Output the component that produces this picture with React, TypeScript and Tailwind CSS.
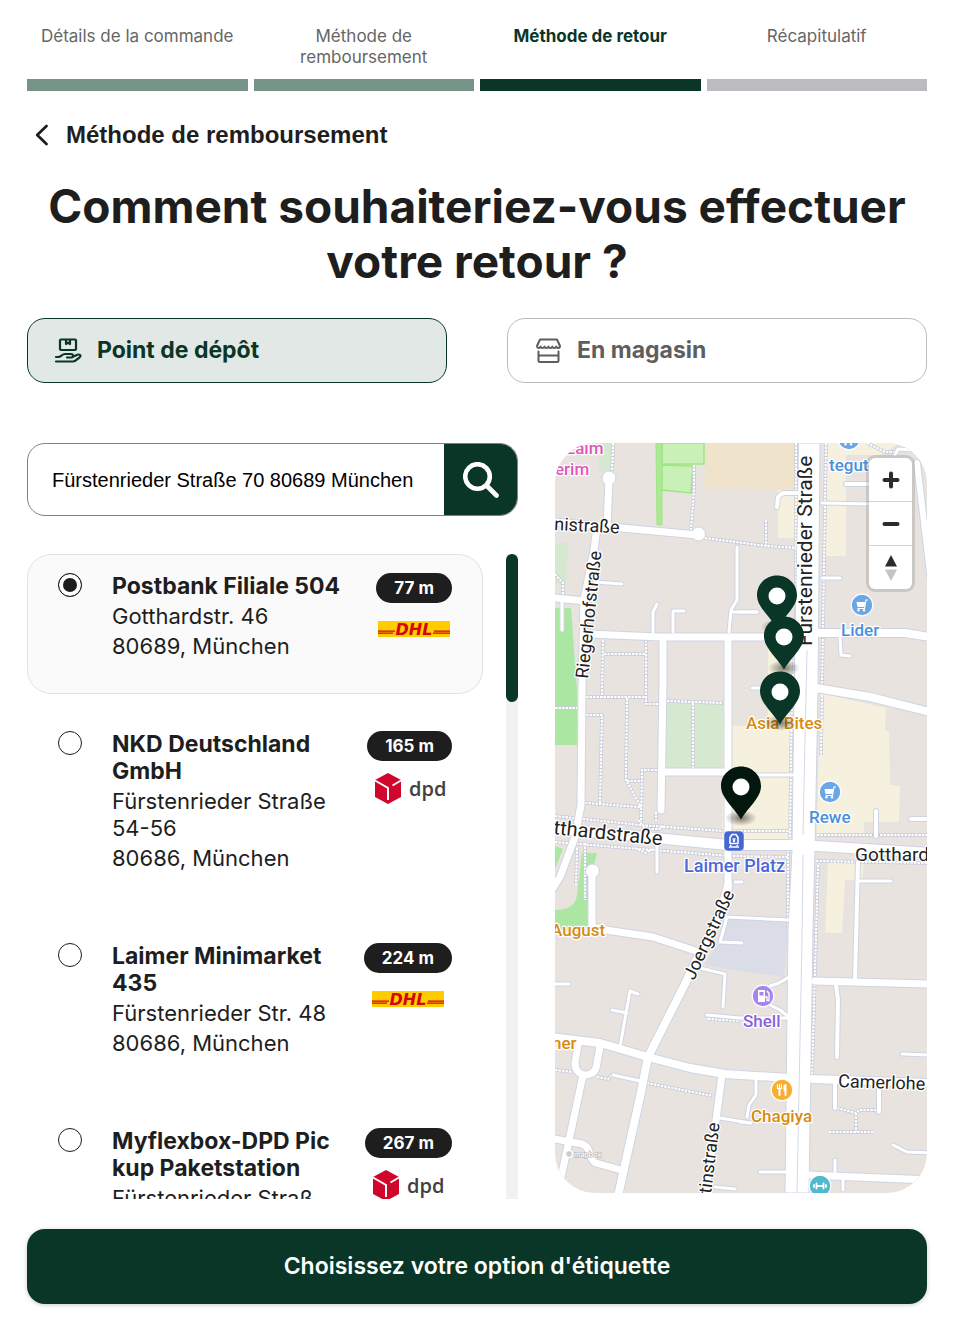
import { useState, type ReactNode } from "react";

type Carrier = "dhl" | "dpd";
type Shop = {
  id: string;
  name: string[];
  address: string[];
  distance: string;
  carrier: Carrier;
};

const steps = [
  { label: "Détails de la commande", state: "done" },
  { label: "Méthode de remboursement", state: "done" },
  { label: "Méthode de retour", state: "current" },
  { label: "Récapitulatif", state: "todo" },
];

const shops: Shop[] = [
  { id: "504", name: ["Postbank Filiale 504"], address: ["Gotthardstr. 46", "80689, München"], distance: "77 m", carrier: "dhl" },
  { id: "nkd", name: ["NKD Deutschland", "GmbH"], address: ["Fürstenrieder Straße\n54-56", "80686, München"], distance: "165 m", carrier: "dpd" },
  { id: "435", name: ["Laimer Minimarket", "435"], address: ["Fürstenrieder Str. 48", "80686, München"], distance: "224 m", carrier: "dhl" },
  { id: "myflex", name: ["Myflexbox-DPD Pic", "kup Paketstation"], address: ["Fürstenrieder Straß"], distance: "267 m", carrier: "dpd" },
];

export default function App() {
  const [method, setMethod] = useState("depot");
  const [selected, setSelected] = useState("504");
  const [query, setQuery] = useState("Fürstenrieder Straße 70 80689 München");

  return (
    <main className="bg-white pt-[26px] pr-[29px] pb-[30px] pl-[27px] font-['Inter',sans-serif] text-[#1e1e1e]">
      <ol className="grid grid-cols-4 gap-1.5">
        {steps.map((s) => (
          <Step key={s.label} label={s.label} state={s.state} />
        ))}
      </ol>

      <button type="button" className="mt-7 ml-2 flex h-8 items-center gap-[17px] font-['Liberation_Sans',sans-serif] text-2xl font-bold">
        <svg viewBox="0 0 14 22" className="h-[22px] w-[14px]" fill="none" stroke="currentColor" strokeWidth="2.8" strokeLinecap="round" strokeLinejoin="round">
          <path d="M11.5 2 2.2 11l9.3 9" />
        </svg>
        Méthode de remboursement
      </button>

      <h1 className="mt-7 text-center text-[46px] leading-[55px] font-bold">
        Comment souhaiteriez-vous effectuer
        <br />
        votre retour ?
      </h1>

      <div className="mt-[29px] grid grid-cols-2 gap-[60px]">
        <MethodButton active={method === "depot"} onClick={() => setMethod("depot")} icon={<HandBoxIcon />}>
          Point de dépôt
        </MethodButton>
        <MethodButton active={method === "store"} onClick={() => setMethod("store")} icon={<StoreIcon />}>
          En magasin
        </MethodButton>
      </div>

      <div className="mt-[60px] grid grid-cols-[491fr_372fr] items-start gap-[37px]">
        <section className="min-w-0">
          <form onSubmit={(e) => e.preventDefault()} className="flex h-[73px] overflow-hidden rounded-[18px] border border-[#808080]">
            <input
              type="text"
              aria-label="Adresse"
              value={query}
              onChange={(e) => setQuery(e.target.value)}
              className="min-w-0 flex-1 pl-6 font-['Liberation_Sans',sans-serif] text-xl text-black outline-none"
            />
            <button type="submit" aria-label="Rechercher" className="flex w-[73px] items-center justify-center bg-[#0a3627] text-white">
              <svg viewBox="0 0 36 36" className="size-9" fill="none" stroke="currentColor" strokeWidth="4.6" strokeLinecap="round">
                <circle cx="14.5" cy="14.5" r="12.3" />
                <path d="m24 24 9.5 9.5" />
              </svg>
            </button>
          </form>

          <div className="mt-[38px] flex h-[645px] gap-[23px]">
            <ul className="flex min-w-0 flex-1 flex-col gap-[18px] overflow-y-auto [scrollbar-width:none]">
              {shops.map((shop) => (
                <ShopRow key={shop.id} shop={shop} checked={shop.id === selected} onSelect={() => setSelected(shop.id)} />
              ))}
            </ul>
            <div className="w-3 bg-[#f1f1f1]">
              <div className="h-[148px] rounded-full bg-[#0a3627]" />
            </div>
          </div>
        </section>

        <section aria-label="Carte" className="relative h-[750px] overflow-hidden rounded-[40px]">
          <StreetMap />
          <div className="absolute top-[15px] right-[15px] flex w-[43px] flex-col divide-y divide-[#d4d4d4] rounded-md bg-white text-[#2b2b2b] shadow-[0_0_0_3px_rgba(0,0,0,0.12)]">
            <button type="button" aria-label="Zoom avant" className="flex h-[44px] items-center justify-center">
              <svg viewBox="0 0 18 18" className="size-[18px]" stroke="currentColor" strokeWidth="4" strokeLinecap="round">
                <path d="M2.5 9h13M9 2.5v13" />
              </svg>
            </button>
            <button type="button" aria-label="Zoom arrière" className="flex h-[44px] items-center justify-center">
              <svg viewBox="0 0 18 18" className="size-[18px]" stroke="currentColor" strokeWidth="4" strokeLinecap="round">
                <path d="M2.5 9h13" />
              </svg>
            </button>
            <button type="button" aria-label="Nord" className="flex h-[43px] items-center justify-center">
              <svg viewBox="0 0 12 26" className="h-[26px] w-3">
                <path d="M6 0 12 11.5H0Z" fill="#2b2b2b" />
                <path d="M6 26 12 14.5H0Z" fill="#c4c4c4" />
              </svg>
            </button>
          </div>
        </section>
      </div>

      <button type="button" className="mt-[30px] h-[75px] w-full rounded-[18px] bg-[#0a3627] text-[23px] font-semibold text-white shadow-[0_1px_5px_rgba(0,0,0,0.2)]">
        Choisissez votre option d'étiquette
      </button>
    </main>
  );
}

function Step({ label, state }: { label: string; state: string }) {
  const text = state === "current" ? "font-bold text-[#0a3627]" : "text-[#666]";
  const bar = state === "done" ? "bg-[#789488]" : state === "current" ? "bg-[#0a3627]" : "bg-[#bcbcc0]";
  return (
    <li className="flex flex-col justify-between gap-[11px]">
      <span className={`px-3 text-center text-[17px] leading-[21px] ${text}`}>{label}</span>
      <span className={`h-3 ${bar}`} />
    </li>
  );
}

type MethodProps = { active: boolean; onClick: () => void; icon: ReactNode; children: ReactNode };

function MethodButton({ active, onClick, icon, children }: MethodProps) {
  const look = active ? "border-[#0a3627] bg-[#e2e8e5] text-[#0a3627]" : "border-[#bcbcc0] bg-white text-[#5e5e5e]";
  return (
    <button
      type="button"
      aria-pressed={active}
      onClick={onClick}
      className={`flex h-[65px] items-center gap-[15px] rounded-[18px] border pl-[26px] text-[23px] font-bold ${look}`}
    >
      {icon}
      {children}
    </button>
  );
}

function ShopRow({ shop, checked, onSelect }: { shop: Shop; checked: boolean; onSelect: () => void }) {
  return (
    <li className={`shrink-0 rounded-3xl border ${checked ? "border-[#e2e2e2] bg-[#fafafa]" : "border-transparent"}`}>
      <label className="flex items-start px-[30px] pt-[18px] pb-[33px] text-[22px] leading-[27px]">
        <input
          type="radio"
          name="shop"
          checked={checked}
          onChange={onSelect}
          className="mr-[30px] size-6 shrink-0 appearance-none rounded-full border border-[#1e1e1e] bg-white checked:bg-[#1e1e1e] checked:shadow-[inset_0_0_0_4px_#fff]"
        />
        <span className="flex min-w-0 flex-1 flex-col gap-[3px] whitespace-pre">
          <span className="text-[23px] font-bold">{shop.name.join("\n")}</span>
          {shop.address.map((line) => (
            <span key={line}>{line}</span>
          ))}
        </span>
        <span className="flex flex-col items-center">
          <span className="rounded-full bg-[#1e1e1e] px-[18px] text-[17px] leading-[30px] font-bold text-white">{shop.distance}</span>
          {shop.carrier === "dhl" ? <DhlLogo /> : <DpdLogo />}
        </span>
      </label>
    </li>
  );
}

function DhlLogo() {
  return (
    <svg viewBox="0 0 72 16" className="mt-[18px] h-4 w-[72px]" role="img" aria-label="DHL">
      <path fill="#fc0" d="M0 0h72v16H0z" />
      <path stroke="#d40511" strokeWidth="1.2" d="M0 10.2h17M0 12.2h15M56 10.2h16M55 12.2h17" />
      <text x="36" y="13.5" textAnchor="middle" className="fill-[#d40511] font-['DejaVu_Sans',sans-serif] text-[16px] font-bold italic">
        DHL
      </text>
    </svg>
  );
}

function DpdLogo() {
  return (
    <svg viewBox="0 0 72 32" className="mt-3 h-8 w-[72px]" role="img" aria-label="dpd">
      <path fill="#d0062c" d="M14 0 27 7v17L14 31 1 24V7Z" />
      <path fill="none" stroke="#fff" strokeWidth="2" d="m1 7.5 13 7.5v12M27 7.5l-8.5 5" />
      <text x="35" y="23" className="fill-[#414042] font-['Open_Sans',sans-serif] text-[20px] font-semibold">
        dpd
      </text>
    </svg>
  );
}

function HandBoxIcon() {
  return (
    <svg viewBox="0 0 28 26" className="h-[26px] w-7" fill="none" stroke="currentColor" strokeWidth="2.2" strokeLinecap="round" strokeLinejoin="round">
      <rect x="6" y="1.5" width="16" height="10.5" rx="1" />
      <path d="M12 2v4l2-1.3L16 6V2" />
      <path d="M2 19h2.500c2.500 0 3.500-3 6.500-3h6c2.500 0 3 3.500 0 3.500h-4" />
      <path d="M19 18.500c2 0 3.500-2 5.500-2 2.500 0 2.500 1.500 1 2.800-2.500 2-4 4.200-6.500 4.200H2" />
    </svg>
  );
}

function StoreIcon() {
  return (
    <svg viewBox="0 0 28 26" className="h-[26px] w-7" fill="none" stroke="currentColor" strokeWidth="2" strokeLinecap="round" strokeLinejoin="round">
      <path d="M6 1.500h17l3 6.500c0 2.500-3 2.500-3.800.6-.8 2-3.100 2-3.900 0-.8 2-3.100 2-3.900 0-.8 2-3.100 2-3.900 0-.8 2-3.100 2-3.900 0-.8 1.900-3.600 1.900-3.600-.6Z" />
      <path d="M4.500 13.500v9c0 1 .7 1.500 1.500 1.500h17c.8 0 1.500-.500 1.500-1.500v-9M4.500 17.500h20" />
    </svg>
  );
}

// Map geometry, in map units: [width, path]
const roads: [number, string][] = [
  [7, "M609 478 607 528M555 522 698 535M555 598 585 601"],
  [7, "M597 527 594 550 584 600 582 690 581 805 575 837 560 877 550 893"],
  [7, "M588 634 660 637 796 637M728 638V893"],
  [7, "M663 638V680L661 810M663 772H728"],
  [8, "M818 633H905L930 637M816 688 870 697 930 712"],
  [10, "M550 828 580 831 665 839 728 845H800L930 853"],
  [8, "M728 885C722 915 700 950 687 980L648 1057 640 1097 618 1196"],
  [7, "M592 871V928L653 937 702 953M591 928H600"],
  [8, "M550 1037 600 1043 648 1057 690 1068 725 1074 790 1078M812 1079 930 1083"],
  [7, "M578 1045 575 1063C575 1078 593 1078 596 1068L600 1047M583 1075 568 1145 557 1196"],
  [7, "M550 1138 582 1144C592 1147 588 1160 596 1163L621 1170"],
  [7, "M722 1075 714 1135 705 1196M815 981 930 984M808 1175 930 1180"],
  [6, "M917 463 932 590"],
  [3, "M562 600V630M595 582 622 584M732 612H757M840 637 841 655 850 656M822 503 870 504"],
  [3, "M653 632V612L657 604M673 632V611H684M729 632 731 610 737 600V547"],
  [3, "M620 1047 630 991 638 994M612 1010 627 1013M613 1075 640 1081M555 984H569"],
  [3, "M700 968 725 974 723 1007M707 1015 740 1018H790M720 1118 750 1123M715 1187 735 1189"],
  [3, "M789 920 727 917 720 942 742 943M770 986 779 983 789 977M770 1005 780 1010 789 1017"],
  [4, "M858 862 855 980M836 985 838 1000 837 1057M835 1083V1108M879 1085V1112"],
  [3, "M860 881H891M902 1054 930 1055M893 1145 907 1152 930 1153M835 1160V1175M843 1180V1190"],
  [3, "M756 1080V1095L749 1105 747 1117M740 1122 751 1123M760 1172H790M657 842V872"],
  [4, "M876 836V811M911 819H930M846 484H870M777 507 778 497 783 493H798"],
  [3, "M740 775H793M752 688H765M740 612H757M822 578H840M895 455 898 449 912 450M735 882H742"],
];

const footpaths =
  "M613 443 612 475M694 465V490L691 530M705 538 767 546 797 548M766 520V546M796 443V640L792 690 790 838M826 443 822 690" +
  "M603 640 602 697M604 654H646M646 640V704H660M586 697H645M627 698 626 780 641 807M586 715H602L600 803M585 803 640 807" +
  "M657 770H642L641 822M627 781H642M667 701 723 703M693 703V768M555 816 640 825 723 831M555 842 640 849 730 856 788 857" +
  "M577 848 576 885M656 812V822M730 831H790M822 695 821 755M817 835H930M816 861 930 863M818 865 812 1075M788 850V930M585 843V900" +
  "M555 1070 572 1072M597 1077 608 1079 612 1075M647 1083 713 1096M837 1108 856 1113 860 1110H878M856 1113V1132M829 1132H873" +
  "M555 574 563 583V595M867 443 885 452H895M555 708H577M638 820 646 829 660 829 664 825M635 848 645 853 655 848M708 1019 740 1021";

type MapLabel = { text: string; x: number; y: number; size: number; fill: string; angle?: number };

const labels: MapLabel[] = [
  { text: "Laim", x: 566, y: 454, size: 17, fill: "#e056b8" },
  { text: "erim", x: 555, y: 475, size: 17, fill: "#e056b8" },
  { text: "nistraße", x: 554, y: 530, size: 18, fill: "#222", angle: 3 },
  { text: "Riegerhofstraße", x: 588, y: 679, size: 18, fill: "#222", angle: -84 },
  { text: "Fürstenrieder Straße", x: 812, y: 646, size: 21, fill: "#222", angle: -90 },
  { text: "tthardstraße", x: 553, y: 834, size: 20, fill: "#222", angle: 6 },
  { text: "Gotthardstraße", x: 855, y: 861, size: 19, fill: "#222" },
  { text: "Joergstraße", x: 694, y: 981, size: 18, fill: "#222", angle: -65 },
  { text: "tinstraße", x: 711, y: 1194, size: 18, fill: "#222", angle: -83 },
  { text: "Camerlohe", x: 838, y: 1087, size: 18, fill: "#222", angle: 2 },
  { text: "tegut", x: 829, y: 471, size: 17, fill: "#4a90dd" },
  { text: "Lider", x: 841, y: 636, size: 17, fill: "#4a90dd" },
  { text: "Rewe", x: 809, y: 823, size: 17, fill: "#4a90dd" },
  { text: "Laimer Platz", x: 684, y: 872, size: 18, fill: "#4a68d8" },
  { text: "Asia Bites", x: 746, y: 729, size: 17, fill: "#d68c10" },
  { text: "August", x: 551, y: 936, size: 17, fill: "#d68c10" },
  { text: "ner", x: 552, y: 1049, size: 17, fill: "#d68c10" },
  { text: "Chagiya", x: 751, y: 1122, size: 17, fill: "#d68c10" },
  { text: "Shell", x: 743, y: 1027, size: 17, fill: "#8a5fe0" },
];

const pins = [
  { x: 777, y: 596, fill: "#0a3627" },
  { x: 784, y: 637, fill: "#0a3627" },
  { x: 780, y: 692, fill: "#0a3627" },
  { x: 741, y: 787, fill: "#04170f" },
];

function StreetMap() {
  return (
    <svg viewBox="555 443 372 750" preserveAspectRatio="xMidYMid slice" className="h-full w-full bg-[#e8e3df]">
      <path fill="#d5e8d0" d="M599 443h12v29h-12zM555 543h13l-2 42h-11zM667 702l56 1-1 65h-56z" />
      <path fill="#ace6a3" d="M555 608h16l6 82v55h-22zM582 853h15l-5 18-2 57-35 4v-22q20 0 22-15zM555 846l8 3-8 20z" />
      <path fill="#c9f0b7" stroke="#a0e583" strokeWidth="1.5" d="M662 443h42v21h-42zM662 465l31 1-2 27-29-3z" />
      <path fill="#ade995" stroke="#a0e583" d="M656 443h6v82h-5z" />
      <path fill="#efe3cc" d="M706 443h91l-2 47-91-3z" />
      <path
        fill="#f6f1de"
        d="M778 490h18v48h-18zM826 443h74l-20 12h-34v101h-20zM768 645h28v195h-74l2-114h44zM820 693l66 15-1 22 4 1 1 54 10 1-1 36h-35v13h-47zM828 863h36l-2 17h-17l-3 53h-17z"
      />
      <path fill="#dadde8" d="m727 917 62 2-5 58-44-6-35-6 15-25z" />

      <g fill="none" strokeLinejoin="round">
        <path d={footpaths} stroke="#c6cad8" strokeWidth="3.5" />
        <path d={footpaths} stroke="#fff" strokeWidth="2.2" strokeDasharray="2.5 1" />
        <g stroke="#cfd4e3" strokeLinecap="round">
          {roads.map(([w, d]) => (
            <path key={d} d={d} strokeWidth={w + 2} />
          ))}
          <circle cx="609" cy="478" r="7" fill="#fff" />
          <circle cx="698.5" cy="534" r="7" fill="#fff" />
          <circle cx="592.5" cy="871" r="7" fill="#fff" />
          <path fill="#fff" d="M799 443h21l-2 247-3 160-2 80-4 263h-24l3-263 4-80 2-160z" />
        </g>
        <g stroke="#fff" strokeLinecap="round">
          {roads.map(([w, d]) => (
            <path key={d} d={d} strokeWidth={w} />
          ))}
        </g>
        <path stroke="#d4d8e6" d="m807 650-2 90-2 95m0 20-1 85-5 253" />
      </g>

      {labels.map((l) => (
        <text
          key={l.text}
          x={l.x}
          y={l.y}
          fontSize={l.size}
          fill={l.fill}
          stroke="#fff"
          strokeWidth="2.5"
          strokeLinejoin="round"
          paintOrder="stroke"
          fontWeight={l.fill === "#222" ? 400 : 500}
          transform={l.angle ? `rotate(${l.angle} ${l.x} ${l.y})` : undefined}
          className="font-['Roboto',sans-serif]"
        >
          {l.text}
        </text>
      ))}

      <Poi x={849} y={439} fill="#6ba6e6"><Cart /></Poi>
      <Poi x={862} y={605} fill="#6ba6e6"><Cart /></Poi>
      <Poi x={830} y={792} fill="#6ba6e6"><Cart /></Poi>
      <Poi x={763} y={996} fill="#a685ec">
        <path fill="#fff" d="M-5-6h7v12h-7z" />
        <path fill="#a685ec" d="M-3.500-4h4v3.500h-4z" />
        <path fill="none" stroke="#fff" strokeWidth="1.300" d="M2 1h2v3.500h2v-7L4-5" />
      </Poi>
      <Poi x={782} y={1090} fill="#f8ae30">
        <path fill="none" stroke="#fff" strokeWidth="1.200" strokeLinecap="round" d="M-4.500-5.500v4h4v-4M-2.500-5.500v10" />
        <path fill="none" stroke="#fff" strokeWidth="2" strokeLinecap="round" d="M-2.500-1v6M3.500-5v10M2.500-4v4" />
      </Poi>
      <Poi x={820} y={1186} fill="#4fb9cf">
        <path fill="none" stroke="#fff" strokeWidth="1.800" strokeLinecap="round" d="M-3 0h6M-3.500-2.500v5M3.500-2.500v5M-6-1v2M6-1v2" />
      </Poi>

      <g transform="translate(734 841)">
        <rect x="-10" y="-10" width="20" height="20" rx="4" fill="#4567d4" stroke="#fff" strokeWidth=".5" />
        <path fill="none" stroke="#fff" strokeWidth="1.600" strokeLinejoin="round" d="M-2-6.500h4l2 3v6H-4v-6ZM-1.500-2h3M-3 4l-1.500 3M3 4l1.500 3M-3 6h6" />
        <circle cy="0" r="1.200" fill="#fff" />
      </g>

      <circle cx="569" cy="1154" r="3.5" fill="#ccc" stroke="#fff" strokeWidth="1.500" />
      <text x="574" y="1157" fontSize="7" fill="#fff" stroke="#aaa" strokeWidth="1" paintOrder="stroke" className="font-['Inter',sans-serif] font-semibold">
        mapbox
      </text>

      <defs>
        <radialGradient id="pinShadow">
          <stop offset="0" stopOpacity=".5" />
          <stop offset="1" stopOpacity="0" />
        </radialGradient>
      </defs>
      {pins.map((p) => (
        <g key={p.y} transform={`translate(${p.x} ${p.y})`}>
          <ellipse cy="31" rx="16" ry="8" fill="url(#pinShadow)" />
          <path fill={p.fill} d="M0-20.500C-11-20.500-20-12-20-1-20 11-8 19 0 32.500 8 19 20 11 20-1 20-12 11-20.500 0-20.500Z" />
          <circle r="8.500" fill="#fff" />
        </g>
      ))}
    </svg>
  );
}

function Poi({ x, y, fill, children }: { x: number; y: number; fill: string; children: ReactNode }) {
  return (
    <g transform={`translate(${x} ${y})`}>
      <circle r="10.8" fill={fill} stroke="#fff" strokeWidth="1.2" />
      {children}
    </g>
  );
}

function Cart() {
  return (
    <g fill="#fff">
      <path d="M-5.500-3h9L2.500 2h-7z" />
      <path fill="none" stroke="#fff" strokeWidth="1.200" d="M6-5H4L2.500 3.500h-7" />
      <circle cx="-3.500" cy="5.300" r="1.200" />
      <circle cx="2" cy="5.300" r="1.200" />
    </g>
  );
}
